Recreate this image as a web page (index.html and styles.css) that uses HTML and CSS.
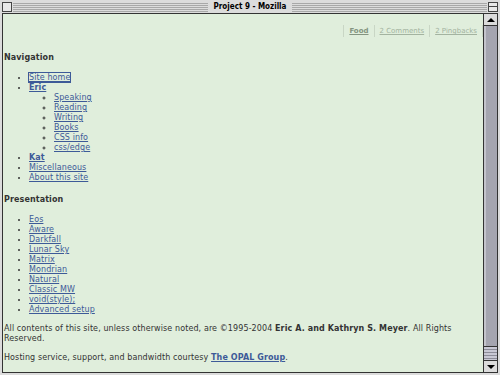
FILE: index.html
```html
<!DOCTYPE html>
<html lang="en">
<head>
<meta charset="UTF-8">
<title>Project 9 - Mozilla</title>
<link rel="stylesheet" href="styles.css">
</head>
<body>
<div class="window">
    <!-- title bar -->
    <div class="titlebar">
        <span class="box close-box"></span>
        <span class="title">Project 9 - Mozilla</span>
        <span class="box zoom-box"></span>
    </div>

    <div class="frame">
        <div class="page">
            <div class="meta-links">
                <a class="meta current" href="#">Food</a><a class="meta" href="#">2 Comments</a><a class="meta" href="#">2 Pingbacks</a>
            </div>

            <h2>Navigation</h2>
            <ul>
                <li><a href="#" class="focused">Site home</a></li>
                <li><a href="#"><b>Eric</b></a>
                    <ul>
                        <li><a href="#">Speaking</a></li>
                        <li><a href="#">Reading</a></li>
                        <li><a href="#">Writing</a></li>
                        <li><a href="#">Books</a></li>
                        <li><a href="#">CSS info</a></li>
                        <li><a href="#">css/edge</a></li>
                    </ul>
                </li>
                <li><a href="#"><b>Kat</b></a></li>
                <li><a href="#">Miscellaneous</a></li>
                <li><a href="#">About this site</a></li>
            </ul>

            <h2 class="second">Presentation</h2>
            <ul>
                <li><a href="#">Eos</a></li>
                <li><a href="#">Aware</a></li>
                <li><a href="#">Darkfall</a></li>
                <li><a href="#">Lunar Sky</a></li>
                <li><a href="#">Matrix</a></li>
                <li><a href="#">Mondrian</a></li>
                <li><a href="#">Natural</a></li>
                <li><a href="#">Classic MW</a></li>
                <li><a href="#">void(style);</a></li>
                <li><a href="#">Advanced setup</a></li>
            </ul>

            <p>All contents of this site, unless otherwise noted, are &copy;1995-2004 <b>Eric A. and Kathryn S. Meyer</b>. All Rights Reserved.</p>
            <p>Hosting service, support, and bandwidth courtesy <a href="#"><b>The OPAL Group</b></a>.</p>
        </div>

        <!-- scroll bar -->
        <div class="scrollbar">
            <div class="arrow up"><span></span></div>
            <div class="track"></div>
            <div class="thumb"></div>
            <div class="arrow down"><span></span></div>
        </div>
    </div>
</div>
</body>
</html>
```

FILE: styles.css
```css
/* global */
body, html {
    margin: 0;
    padding: 0;
}

.window {
    width: 500px;
    height: 375px;
    box-sizing: border-box;
    background: #dcdcdc;
    padding: 0 2px 2px 2px;
    display: flex;
    flex-direction: column;
    overflow: hidden;
}

/* title bar */
.titlebar {
    height: 13px;
    flex: none;
    display: flex;
    align-items: center;
    justify-content: space-between;
    background: repeating-linear-gradient(to bottom, #dcdcdc 0, #dcdcdc 1px, #a8a8a8 1px, #a8a8a8 2px);
    background-size: 100% 10px;
    background-position: 0 2px;
    background-repeat: repeat-x;
    background-color: #dcdcdc;
}

.title {
    background: #dcdcdc;
    padding: 0 6px;
    font-family: "DejaVu Sans Condensed", "DejaVu Sans", sans-serif;
    font-stretch: condensed;
    font-weight: bold;
    font-size: 8px;
    line-height: 12px;
    color: #000;
}

.box {
    width: 8px;
    height: 8px;
    border: 1px solid #444;
    background: #e8e8e8;
    box-shadow: 0 0 0 1px #dcdcdc;
    flex: none;
}

.zoom-box {
    background: linear-gradient(to bottom, #e8e8e8 0, #e8e8e8 3px, #444 3px, #444 4px, #e8e8e8 4px);
}

/* main frame */
.frame {
    flex: 1;
    display: flex;
    border: 1px solid #333;
    min-height: 0;
}

.page {
    flex: 1;
    background: #e0eedc;
    padding: 11px 0 0 1px;
    font-family: "DejaVu Sans", sans-serif;
    font-size: 8px;
    line-height: 10px;
    letter-spacing: 0.1px;
    color: #333;
    overflow: hidden;
}

a {
    color: #3d5a98;
}

.focused {
    outline: 1px solid #3d5a98;
    outline-offset: 0;
}

/* top right links */
.meta-links {
    display: flex;
    justify-content: flex-end;
    line-height: 12px;
}

.meta {
    color: #a3b3a0;
    font-size: 7px;
    letter-spacing: 0;
    border-left: 1px solid #c9d6c5;
    padding: 0 5px;
}

.meta:last-child {
    border-right: 1px solid #c9d6c5;
}

.meta.current {
    color: #849480;
    font-weight: bold;
}

h2 {
    font-size: 8px;
    line-height: 10px;
    margin: 16px 0 10px 0;
}

h2.second {
    margin-top: 12px;
}

ul {
    margin: 0;
    padding-left: 25px;
}

p {
    margin: 9px 0;
}

/* scroll bar */
.scrollbar {
    width: 13px;
    flex: none;
    border-left: 1px solid #333;
    display: flex;
    flex-direction: column;
    background: #dcdcdc;
}

.arrow {
    height: 11px;
    flex: none;
    display: flex;
    align-items: center;
    justify-content: center;
    border-bottom: 1px solid #333;
}

.arrow.down {
    border-bottom: none;
    border-top: 1px solid #333;
}

.arrow span {
    width: 0;
    height: 0;
    border-left: 4px solid transparent;
    border-right: 4px solid transparent;
}

.arrow.up span {
    border-bottom: 4px solid #000;
}

.arrow.down span {
    border-top: 4px solid #000;
}

.track {
    flex: 1;
    background: #a5a5b0;
    border-left: 2px solid #c4c4cc;
}

.thumb {
    height: 13px;
    flex: none;
    border-top: 1px solid #333;
    background: repeating-linear-gradient(to bottom, #c8c8d4 0, #c8c8d4 2px, #8c8c98 2px, #8c8c98 3px);
    background-color: #c8c8d4;
}
```
